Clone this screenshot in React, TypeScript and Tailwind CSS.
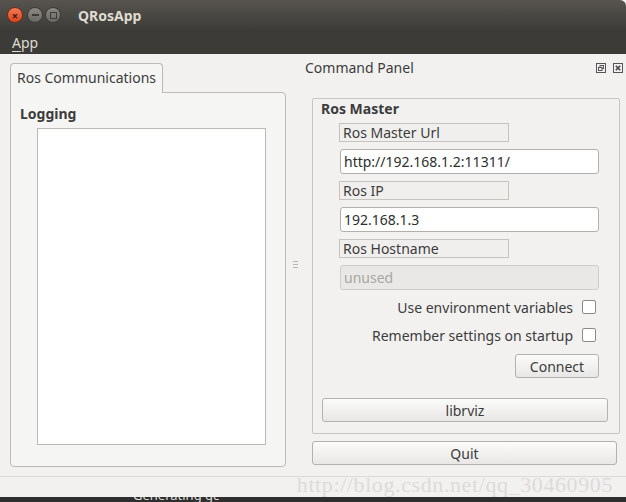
import React from 'react';

const font = { fontFamily: '"Noto Sans", "Open Sans", sans-serif' };

const FieldLabel: React.FC<{ text: string }> = ({ text }) => (
  <div className="ml-[26px] w-[170px] h-[19px] border border-[#c6c3be] bg-[#f0efee] px-[3px] text-[14px] leading-[17px] text-[#3c3c3c]">
    {text}
  </div>
);

const Field: React.FC<{ value: string; disabled?: boolean }> = ({ value, disabled }) => (
  <div
    className={`ml-[27px] w-[259px] h-[25px] rounded-[3px] border px-[3px] text-[14px] leading-[23px] ${
      disabled ? 'bg-[#e9e8e6] border-[#cfccc7] text-[#a8a6a2]' : 'bg-white border-[#b3b0ab] text-[#2e2e2e]'
    }`}
  >
    {value}
  </div>
);

const Check: React.FC<{ text: string }> = ({ text }) => (
  <div className="flex items-center justify-end pr-[23px] h-[28px] text-[14px] text-[#3c3c3c]">
    <span>{text}</span>
    <span className="ml-[9px] w-[14px] h-[14px] rounded-[2px] border border-[#8e8b86] bg-white" />
  </div>
);

const Btn: React.FC<{ text: string; className: string }> = ({ text, className }) => (
  <div
    className={`h-[24px] shrink-0 rounded-[3px] border border-[#b5b2ad] bg-gradient-to-b from-[#fbfbfa] to-[#e8e7e5] flex items-center justify-center text-[14px] text-[#3c3c3c] ${className}`}
  >
    {text}
  </div>
);

export default function App() {
  return (
    <div className="w-[626px] h-[502px] flex flex-col overflow-hidden bg-[#f2f1f0]" style={font}>
      {/* title bar */}
      <div className="h-[30px] shrink-0 bg-gradient-to-b from-[#57544e] to-[#3d3c38] flex items-center pl-[7px] rounded-tr-[6px]">
        <div className="w-[16px] h-[16px] rounded-full bg-gradient-to-b from-[#f37a55] to-[#d9441c] border border-[#7a2a14] flex items-center justify-center text-[11px] leading-none text-[#3a1a10] font-bold">
          ×
        </div>
        <div className="ml-[4px] w-[16px] h-[16px] rounded-full bg-gradient-to-b from-[#8d8a84] to-[#6a6863] border border-[#3c3b37] flex items-center justify-center">
          <span className="w-[7px] h-[2px] bg-[#3c3b37]" />
        </div>
        <div className="ml-[2px] w-[16px] h-[16px] rounded-full bg-gradient-to-b from-[#8d8a84] to-[#6a6863] border border-[#3c3b37] flex items-center justify-center">
          <span className="w-[7px] h-[7px] border-[1.5px] border-[#3c3b37]" />
        </div>
        <span className="ml-[17px] text-[14px] font-bold text-[#dfdbd2]">QRosApp</span>
      </div>

      {/* menu bar */}
      <div className="h-[24px] shrink-0 bg-[#3c3b37] flex items-center pl-[12px] text-[14px] text-[#dfdbd2]">
        <span>
          <span className="underline underline-offset-[3px]">A</span>pp
        </span>
      </div>

      {/* body */}
      <div className="h-[443px] shrink-0 flex flex-col">
        <div className="flex h-[422px] shrink-0">
          {/* left tabs */}
          <div className="w-[276px] ml-[10px] pt-[9px] flex flex-col">
            <div className="w-[153px] h-[30px] border border-b-0 border-[#bdbab5] rounded-t-[4px] bg-[#f5f5f4] px-[6px] text-[14px] leading-[28px] whitespace-nowrap text-[#3c3c3c] relative z-10 -mb-px">
              Ros Communications
            </div>
            <div className="h-[375px] border border-[#bdbab5] rounded-b-[4px] rounded-tr-[4px] bg-[#f5f5f4] flex flex-col pl-[9px] pr-[19px]">
              <div className="pt-[11px] h-[35px] text-[14px] font-bold text-[#3c3c3c] leading-[20px]">Logging</div>
              <div className="ml-[17px] h-[317px] bg-white border border-[#bdbab5]" />
            </div>
          </div>

          {/* splitter */}
          <div className="w-[18px] flex items-center justify-center">
            <div className="flex flex-col gap-[2px] mt-[-1px]">
              <span className="w-[5px] h-px bg-[#b9b6b1]" />
              <span className="w-[5px] h-px bg-[#b9b6b1]" />
              <span className="w-[5px] h-px bg-[#b9b6b1]" />
            </div>
          </div>

          {/* dock */}
          <div className="flex-1 flex flex-col">
            <div className="h-[25px] shrink-0 flex items-center pt-[2px] pl-px pr-[3px] justify-between">
              <span className="text-[14px] text-[#3c3c3c]">Command Panel</span>
              <div className="flex gap-[7px]">
                <svg width="10" height="10" viewBox="0 0 10 10">
                  <rect x="0.5" y="0.5" width="9" height="9" fill="none" stroke="#555" />
                  <rect x="4" y="2.5" width="3.5" height="3" fill="none" stroke="#555" />
                  <rect x="2.5" y="4.5" width="3.5" height="3" fill="#f2f1f0" stroke="#555" />
                </svg>
                <svg width="10" height="10" viewBox="0 0 10 10">
                  <rect x="0.5" y="0.5" width="9" height="9" fill="none" stroke="#555" />
                  <path d="M2.8 2.8 L7.2 7.2 M7.2 2.8 L2.8 7.2" stroke="#444" strokeWidth="1.6" />
                </svg>
              </div>
            </div>
            <div className="ml-[8px] mt-[19px] w-[308px] h-[336px] shrink-0 border border-[#c9c6c1] rounded-[2px] flex flex-col">
              <div className="pl-[8px] h-[24px] text-[14px] font-bold text-[#3c3c3c] leading-[20px]">Ros Master</div>
              <FieldLabel text="Ros Master Url" />
              <div className="h-[7px]" />
              <Field value="http://192.168.1.2:11311/" />
              <div className="h-[7px]" />
              <FieldLabel text="Ros IP" />
              <div className="h-[7px]" />
              <Field value="192.168.1.3" />
              <div className="h-[7px]" />
              <FieldLabel text="Ros Hostname" />
              <div className="h-[7px]" />
              <Field value="unused" disabled />
              <div className="h-[3px]" />
              <Check text="Use environment variables" />
              <Check text="Remember settings on startup" />
              <div className="h-[5px]" />
              <Btn text="Connect" className="ml-[202px] w-[84px]" />
              <div className="h-[20px]" />
              <Btn text="librviz" className="ml-[9px] w-[286px]" />
            </div>
            <Btn text="Quit" className="mt-[7px] ml-[8px] w-[305px]" />
          </div>
        </div>

        <div className="h-px shrink-0 bg-[#dcdad6]" />
        <div className="h-[20px] shrink-0 flex items-center justify-end pr-[13px]">
          <span className="text-[22px] leading-none text-[#dddbd8] tracking-[0.6px] -mt-[4px]" style={{ fontFamily: '"Liberation Serif", serif' }}>
            http://blog.csdn.net/qq_30460905
          </span>
        </div>
      </div>

      {/* dock strip */}
      <div className="h-[5px] shrink-0 bg-[#2e2e2e] overflow-hidden flex items-start">
        <span className="ml-[133px] -mt-[9px] text-[13px] leading-[14px] text-[#ddd]">Generating gc</span>
      </div>
    </div>
  );
}
